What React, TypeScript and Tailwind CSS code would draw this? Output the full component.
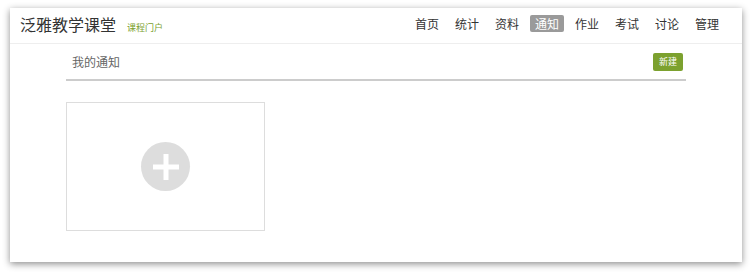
import React from "react";

const navItems = ["首页", "统计", "资料", "通知", "作业", "考试", "讨论", "管理"];

function Header() {
  return (
    <div className="flex h-[36px] items-start justify-between border-b border-[#eee] pl-[10px] pr-[18px]">
      <div className="flex items-baseline pt-[4px]">
        <span className="text-[16px] leading-[24px] text-[#333]">泛雅教学课堂</span>
        <span className="ml-[11px] text-[9px] text-[#7ca12f]">课程门户</span>
      </div>
      <div className="flex pt-[7px]">
        {navItems.map((item, i) => (
          <span
            key={item}
            className={
              (item === "通知"
                ? "rounded-[2px] bg-[#9a9a9a] text-white "
                : "text-[#333] ") +
              (i === 0 ? "" : "ml-[6px] ") +
              "px-[5px] text-[12px] leading-[17px]"
            }
          >
            {item}
          </span>
        ))}
      </div>
    </div>
  );
}

function AddCard() {
  return (
    <div className="flex h-[129px] w-[199px] items-center justify-center border border-[#ddd]">
      <div className="flex h-[49px] w-[49px] items-center justify-center rounded-full bg-[#ddd]">
        <svg width="26" height="26" viewBox="0 0 26 26">
          <rect x="10.5" y="0" width="5" height="26" fill="white" />
          <rect x="0" y="10.5" width="26" height="5" fill="white" />
        </svg>
      </div>
    </div>
  );
}

export default function App() {
  return (
    <div
      className="h-[273px] w-[754px] bg-white pl-[10px] pt-[8px]"
      style={{ fontFamily: '"Noto Sans CJK SC", "Liberation Sans", sans-serif' }}
    >
      <div className="h-[254px] w-[732px] bg-white shadow-[0_2px_7px_rgba(0,0,0,0.45)]">
        <Header />
        <div className="mx-[56px] w-[620px]">
          <div className="flex items-center justify-between border-b-2 border-[#ccc] pb-[8px] pl-[6px] pr-[3px] pt-[9px]">
            <span className="text-[12px] leading-[18px] text-[#666]">我的通知</span>
            <button className="h-[18px] rounded-[2px] bg-[#7ca12f] px-[6px] text-[9px] leading-[18px] text-white">
              新建
            </button>
          </div>
          <div className="mt-[21px]">
            <AddCard />
          </div>
        </div>
      </div>
    </div>
  );
}
